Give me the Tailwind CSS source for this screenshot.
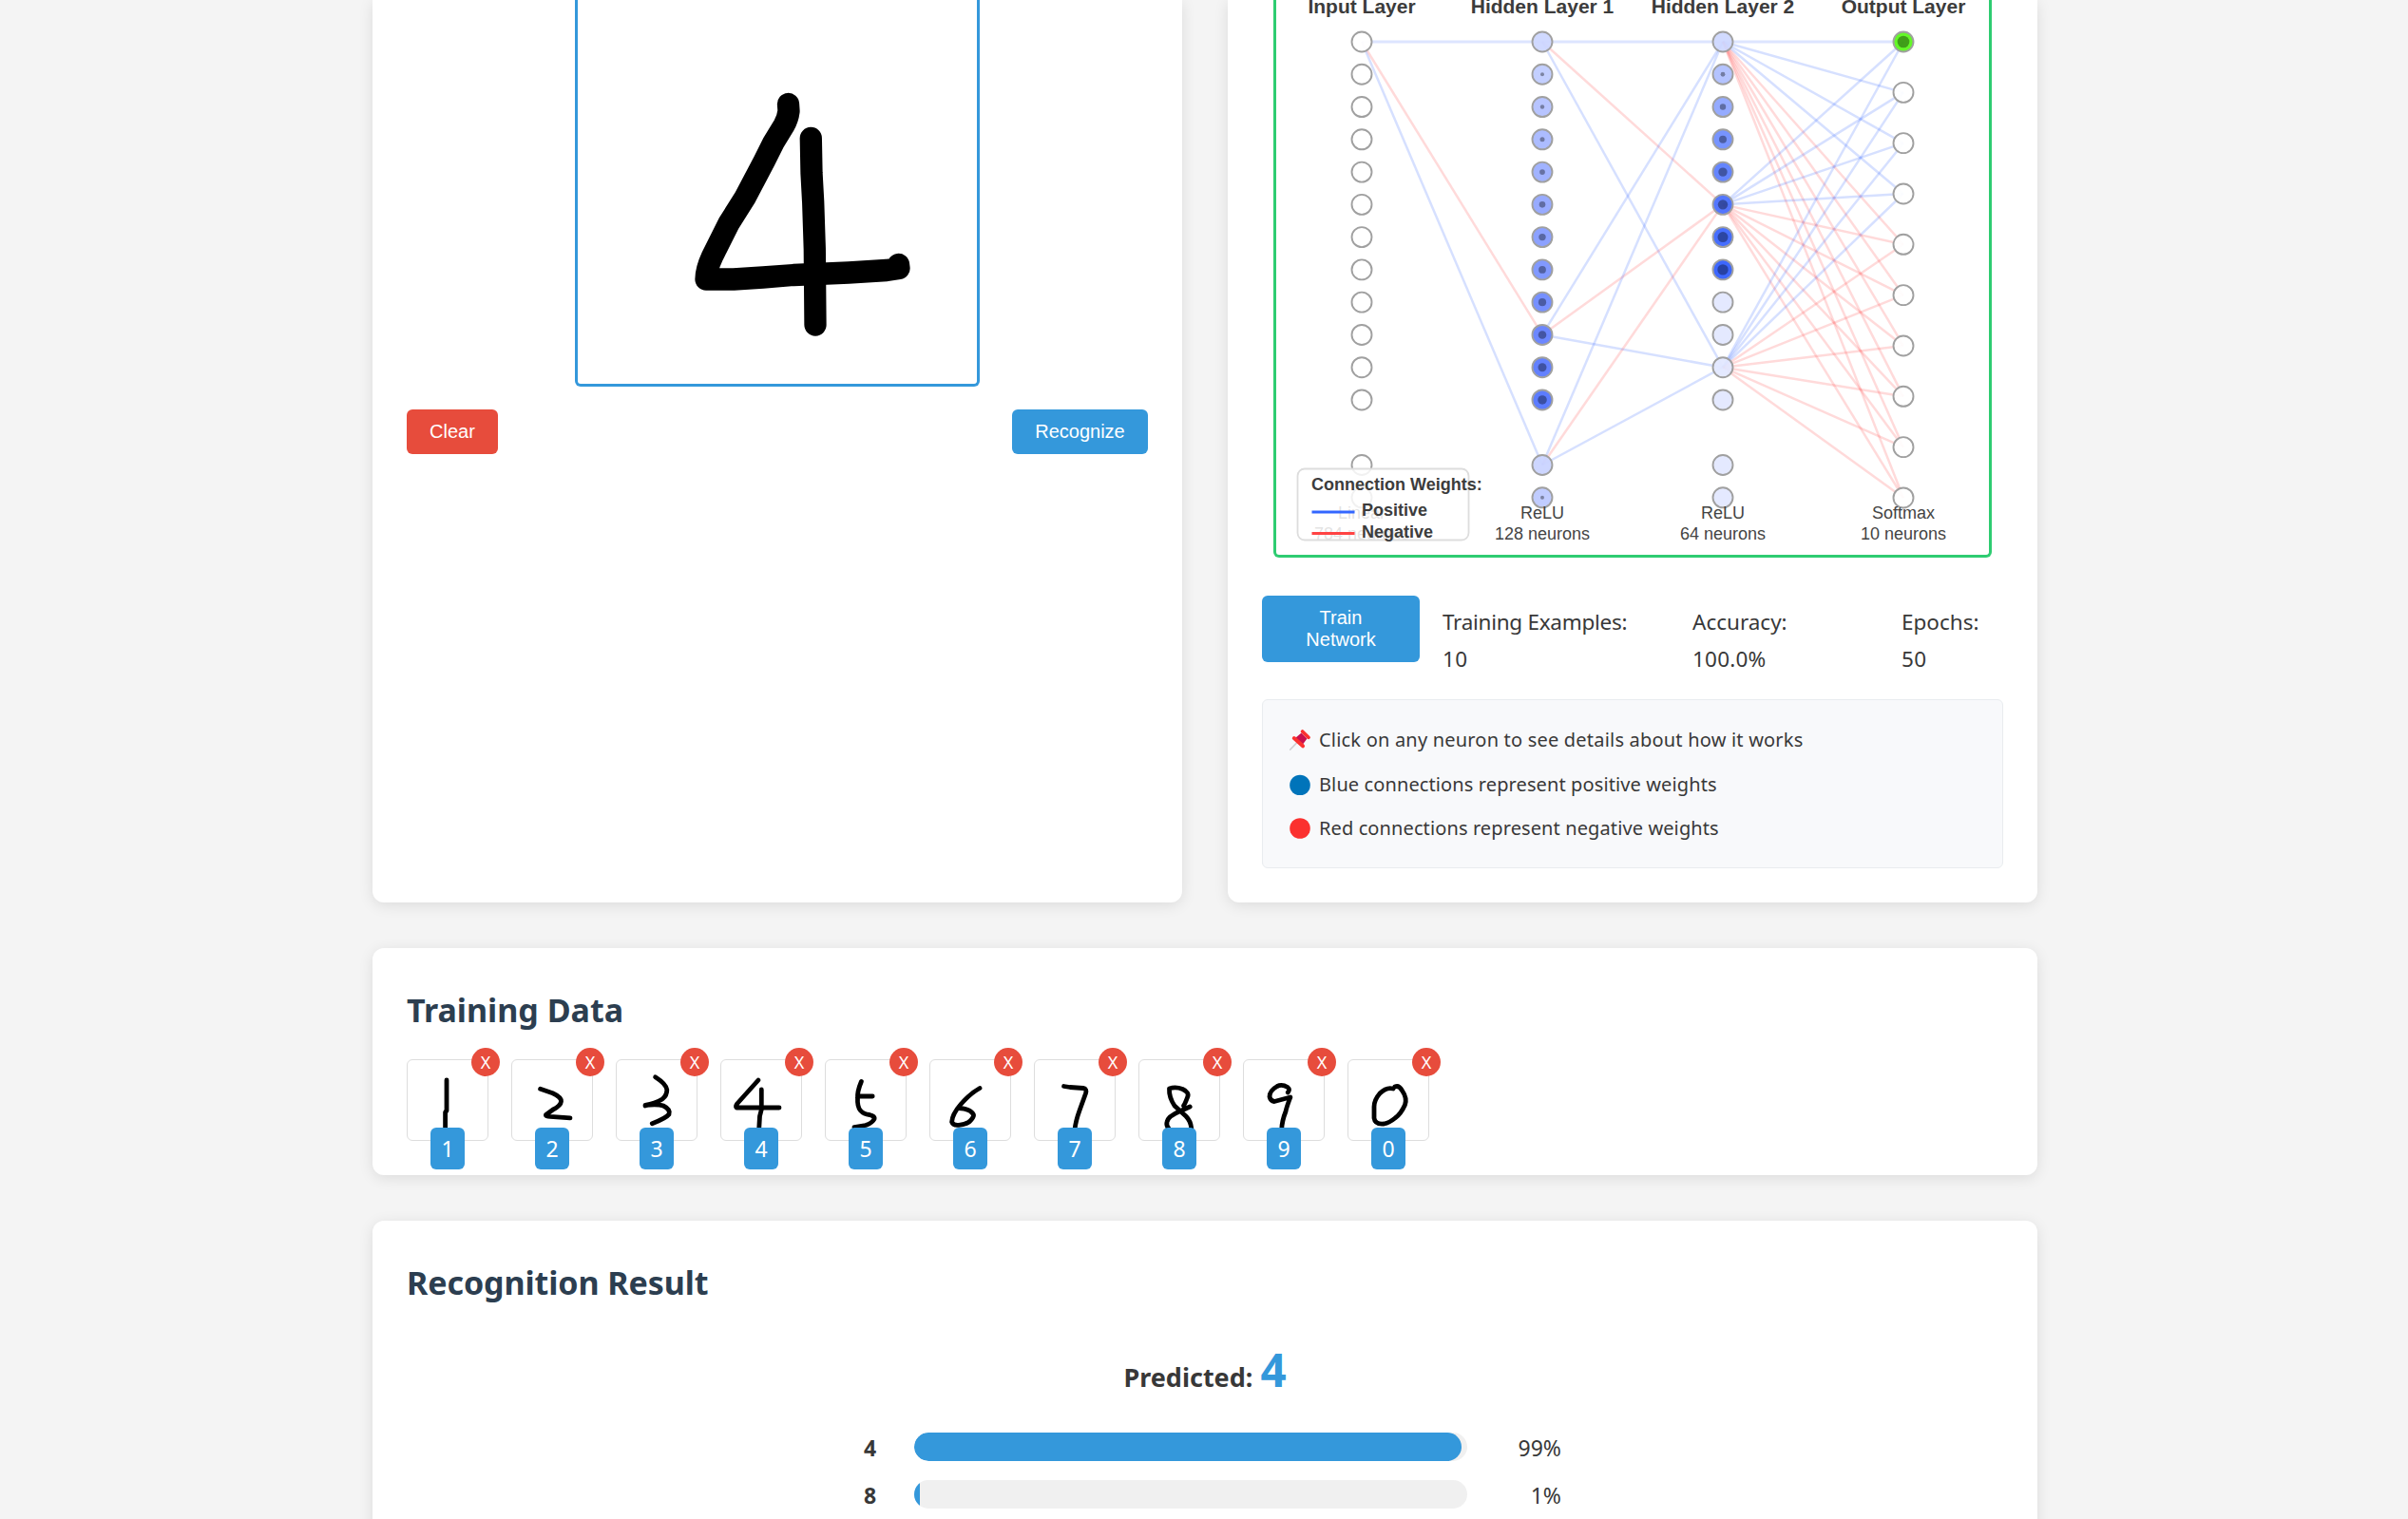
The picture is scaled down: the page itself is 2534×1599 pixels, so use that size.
<!DOCTYPE html>
<html lang="en">
<head>
<meta charset="utf-8">
<title>Digit Recognition</title>
<script src="https://cdn.jsdelivr.net/npm/@tailwindcss/browser@4"></script>
</head>
<body class="bg-[#f4f4f4] font-['Noto_Sans',sans-serif] text-[#383838]">
<div class="h-[1599px] overflow-hidden">
<main class="ml-[392px] flex w-[1752px] flex-col gap-12">

  <div class="grid grid-cols-2 gap-12">
    <section class="flex h-[950px] flex-col rounded-b-xl bg-white px-9 shadow-[0_3px_15px_rgba(0,0,0,0.1)]">
      <div class="mx-auto h-[407px] w-[426px] rounded-b-md border-3 border-t-0 border-[#3498db]">
        <svg class="block" width="420" height="404" viewBox="608 0 420 404" fill="none" stroke="#000" stroke-width="23.3" stroke-linecap="round" stroke-linejoin="round">
          <path d="M829.5 109.5L830 117Q829 125 825 132L814 150L804 170L784 208L767 235L749.5 270Q743 284 743 294L772 294L803 292L835 289.5L893 287L933 284.5L946 282.5L945.5 278.5"/>
          <path d="M853.3 145.5L854 182L855.7 213L857.3 262L858 342"/>
        </svg>
      </div>
      <div class="mt-6 flex justify-between font-['Liberation_Sans',Arial,sans-serif] text-xl leading-[23px] text-white">
        <button class="h-[47px] w-24 rounded-md bg-[#e74c3c] pb-px">Clear</button>
        <button class="h-[47px] w-[143px] rounded-md bg-[#3498db] pb-px">Recognize</button>
      </div>
    </section>

    <section class="flex h-[950px] flex-col rounded-b-xl bg-white px-9 shadow-[0_3px_15px_rgba(0,0,0,0.1)]">
      <div class="mx-auto h-[587px] w-[756px] rounded-b-md border-3 border-t-0 border-[#2ecc71]">
        <svg class="block font-['Liberation_Sans',Arial,sans-serif]" width="750" height="584" viewBox="1343 0 750 584">
          <g id="edges"></g>
          <g id="nodes"></g>
          <g text-anchor="middle" fill="#3c3c3c" font-size="21" font-weight="700">
            <text x="1433" y="13.5">Input Layer</text>
            <text x="1623" y="13.5">Hidden Layer 1</text>
            <text x="1813" y="13.5">Hidden Layer 2</text>
            <text x="2003" y="13.5">Output Layer</text>
          </g>
          <g text-anchor="middle" fill="#444" font-size="18">
            <text x="1433" y="546">Linear</text><text x="1433" y="568">784 neurons</text>
            <text x="1623" y="546">ReLU</text><text x="1623" y="568">128 neurons</text>
            <text x="1813" y="546">ReLU</text><text x="1813" y="568">64 neurons</text>
            <text x="2003" y="546">Softmax</text><text x="2003" y="568">10 neurons</text>
          </g>
          <rect x="1365.5" y="493.5" width="180" height="75" rx="7.5" fill="#fff" fill-opacity=".85" stroke="#ddd" stroke-width="1.8"/>
          <g fill="#3c3c3c" font-size="18" font-weight="700">
            <text x="1380" y="516">Connection Weights:</text>
            <text x="1433" y="542.5">Positive</text>
            <text x="1433" y="565.5">Negative</text>
          </g>
          <path d="M1380.5 539H1425.5" stroke="#3366ff" stroke-width="3"/>
          <path d="M1380.5 561.4H1425.5" stroke="#ff4444" stroke-width="3"/>
        </svg>
      </div>

      <div class="mt-10 flex h-[109px] items-start">
        <button class="h-[70px] w-[166px] rounded-md bg-[#3498db] px-6 pb-px font-['Liberation_Sans',Arial,sans-serif] text-xl leading-[23px] text-white">Train Network</button>
        <div class="ml-6 flex pt-[9px] text-[22.5px] leading-[38.7px]">
          <div class="w-[263px]"><p class="tracking-[-0.28px]">Training Examples:</p><p class="tracking-[0.4px]">10</p></div>
          <div class="w-[220px]"><p>Accuracy:</p><p class="tracking-[0.2px]">100.0%</p></div>
          <div><p>Epochs:</p><p class="tracking-[0.4px]">50</p></div>
        </div>
      </div>

      <ul class="h-[178px] rounded-md border border-[#e9ecef] bg-[#f8f9fb] py-[19px] pl-7 text-xl leading-[46.6px]">
        <li class="flex h-[46.6px] items-center gap-[9px] tracking-[0.2px]">
          <svg width="22" height="22" viewBox="0 0 22 22">
            <path d="M.8 21L8 13.500" stroke="#cfd0d2" stroke-width="1.8" stroke-linecap="round"/>
            <path d="M6.500 8.500L12.500 3.500L18.500 9.500L14 15.500Z" fill="#c8104e"/>
            <path d="M4.800 9L14 17.300" stroke="#fb312f" stroke-width="4" stroke-linecap="round"/>
            <path d="M13.600 2L20 8.300" stroke="#fb312f" stroke-width="3.600" stroke-linecap="round"/>
          </svg>Click on any neuron to see details about how it works</li>
        <li class="flex h-[46.6px] items-center gap-[9px] tracking-[0.11px]"><svg width="22" height="22"><circle cx="11" cy="11.500" r="10.800" fill="#0074ba"/></svg>Blue connections represent positive weights</li>
        <li class="flex h-[46.6px] items-center gap-[9px] tracking-[0.11px]"><svg width="22" height="22"><circle cx="11" cy="11" r="10.800" fill="#fb312f"/></svg>Red connections represent negative weights</li>
      </ul>
    </section>
  </div>

  <section class="h-[239px] rounded-xl bg-white p-9 shadow-[0_3px_15px_rgba(0,0,0,0.1)]">
    <h2 class="text-[34px] leading-[59px] font-bold text-[#2c3e50]">Training Data</h2>
    <div id="samples" class="mt-[22px] flex gap-6"></div>
  </section>

  <section class="h-[400px] rounded-t-xl bg-white p-9 shadow-[0_3px_15px_rgba(0,0,0,0.1)]">
    <h2 class="text-[34px] leading-[59px] font-bold tracking-[-0.08px] text-[#2c3e50]">Recognition Result</h2>
    <div class="mt-[23px] flex h-[77px] items-baseline justify-center gap-2 font-bold">
      <span class="text-[27px]">Predicted:</span><span class="text-[47.500px] leading-[77px] text-[#3498db]">4</span>
    </div>
    <div class="mx-auto mt-6 flex w-[750px] flex-col gap-3 text-[23px] leading-9">
      <div class="flex h-[38px] items-center gap-6">
        <span class="w-[45px] pt-px text-center font-bold">4</span>
        <div class="h-[30px] flex-1 overflow-hidden rounded-full bg-[#f0f0f0]"><div class="h-full rounded-full bg-[#3498db]" style="width:99%"></div></div>
        <span class="w-[75px] pt-px text-right">99%</span>
      </div>
      <div class="flex h-[38px] items-center gap-6">
        <span class="w-[45px] pt-px text-center font-bold">8</span>
        <div class="h-[30px] flex-1 overflow-hidden rounded-full bg-[#f0f0f0]"><div class="h-full bg-[#3498db]" style="width:1%"></div></div>
        <span class="w-[75px] pt-px text-right">1%</span>
      </div>
    </div>
  </section>
</main>
</div>

<script>
// Network diagram
const X = [1433, 1623, 1813, 2003];
const y = i => 44 + i * 34.27, yo = i => 44 + i * 53.33;
const edge = (x1, y1, x2, y2, pos) =>
  `<line x1="${x1}" y1="${y1}" x2="${x2}" y2="${y2}" stroke="${pos ? '#3366ff' : '#ff4444'}" stroke-opacity="${y1 === y2 ? .17 : .2}" stroke-width="${y1 === y2 ? 3 : 2.5}"/>`;
let e = '';
[[0, 1], [9, 0], [13, 1]].forEach(([j, p]) => e += edge(X[0], y(0), X[1], y(j), p));
[0, 9, 13].forEach(a => [0, 5, 10].forEach(b => e += edge(X[1], y(a), X[2], y(b), b !== 5)));
[0, 5, 10].forEach(a => { for (let k = 0; k < 10; k++) e += edge(X[2], y(a), X[3], yo(k), k < 4); });
document.getElementById('edges').innerHTML = e;

const node = (x, cy, fill, dot) =>
  `<circle cx="${x}" cy="${cy}" r="10.500" fill="${fill}" fill-opacity=".95" stroke="#a0a0a0" stroke-width="1.900"/>` +
  (dot ? `<circle cx="${x}" cy="${cy}" r="${dot}" fill="#000" fill-opacity=".36"/>` : '');
const rows = [0, 1, 2, 3, 4, 5, 6, 7, 8, 9, 10, 11, 13, 14];
const h1 = ['#cdd7ff', '#c0ccff', '#b3c1ff', '#a8b8ff', '#9cafff', '#92a6ff', '#869cff', '#7a93ff', '#6f8aff', '#6481ff', '#5b7aff', '#5375ff', '#cad4ff', '#bdc9ff'];
const d1 = [0, 2, 2.2, 2.5, 2.9, 3.3, 3.7, 3.9, 4.1, 4.3, 4.5, 4.8, 0, 2];
const h2 = ['#cfd8ff', '#b0c0ff', '#8fa6ff', '#708eff', '#5c7eff', '#4a70ff', '#3c66ff', '#335fff', '#e3e8ff', '#e3e8ff', '#e3e8ff', '#e3e8ff', '#e3e8ff', '#e3e8ff'];
const d2 = [0, 2.4, 3.2, 4, 4.7, 5.2, 5.5, 5.7, 0, 0, 0, 0, 0, 0];
let n = '';
rows.forEach((r, i) => {
  n += node(X[0], y(r), '#fff', 0) + node(X[1], y(r), h1[i], d1[i]) + node(X[2], y(r), h2[i], d2[i]);
});
for (let k = 0; k < 10; k++) n += node(X[3], yo(k), k ? '#fff' : '#5cf81c', k ? 0 : 6.3);
document.getElementById('nodes').innerHTML = n;

// Training samples: label and pen strokes
const samples = [
  ['1', 'M42 22V54L40.600 56V74'],
  ['2', 'M30.600 31.300L43.600 35.700Q53 40 52.500 44.500Q52 49 44 53L36.500 58.500Q36 60 41 60.300L62 61.800'],
  ['3', 'M41.600 18.700Q53 26 53.800 32Q54 38 49 42Q41 47 31 48.300Q45 47 50 49Q58 53 56 58Q53 62 38.300 67.700M31 49L42 47'],
  ['4', 'M40 22L18 46.500Q15.500 50 17 51H62M43.300 32V53L41.500 60L40.700 74'],
  ['5', 'M38.400 23.500Q34 34 34.500 41Q34 50 37.500 54Q41 58 47 58.500Q53 60 52 63Q50 67 43 69.500L31 71.500M35.400 39H50.200'],
  ['6', 'M53 30.500Q43 36 33 47.500Q24 58 23.600 66Q25 70 31 69.300Q38 69 42.400 65.500Q48 60 46 57.500Q42 52 31 51.500'],
  ['7', 'M31.500 28.500L38 29.500L52 30.500Q56 31 54.500 36L48 54Q44 65 43 74'],
  ['8', 'M54.200 50L44.300 54.500Q31 60 30 66Q29 70 32 73M55.800 73Q55 65 50 60L38 49Q32 40 32.500 31Q39 28.500 46.500 31.500Q54 35 51.600 40Q49 47 47.500 49'],
  ['9', 'M47.200 35Q50 32 47 29.500Q41 26 36 28.500Q28 33 28 39.500Q29 44 33 44.500L49.900 40Q46 50 45 55Q41 65 40.700 74'],
  ['0', 'M50 29Q54 27 57.500 33Q63 41 60.500 48Q56 58 50 62Q44 67 38.500 68Q29 69 28 62V50Q28 43 34 36Q41 29 48 31']
];
document.getElementById('samples').innerHTML = samples.map(([d, p]) => `
  <div class="relative h-[86px] w-[86px] rounded-md border border-[#ddd]">
    <svg class="absolute -top-px -left-px" width="86" height="86" viewBox="0 0 86 86" fill="none" stroke="#000" stroke-width="4.800" stroke-linecap="round" stroke-linejoin="round"><path d="${p}"/></svg>
    <span class="absolute -top-[13px] -right-[13px] flex size-[30px] items-center justify-center rounded-full bg-[#e74c3c] text-lg leading-none text-white">X</span>
    <span class="absolute top-[71px] left-6 flex h-[44px] w-9 items-center justify-center rounded-md bg-[#3498db] pt-px text-[23px] leading-none text-white">${d}</span>
  </div>`).join('');
</script>
</body>
</html>
